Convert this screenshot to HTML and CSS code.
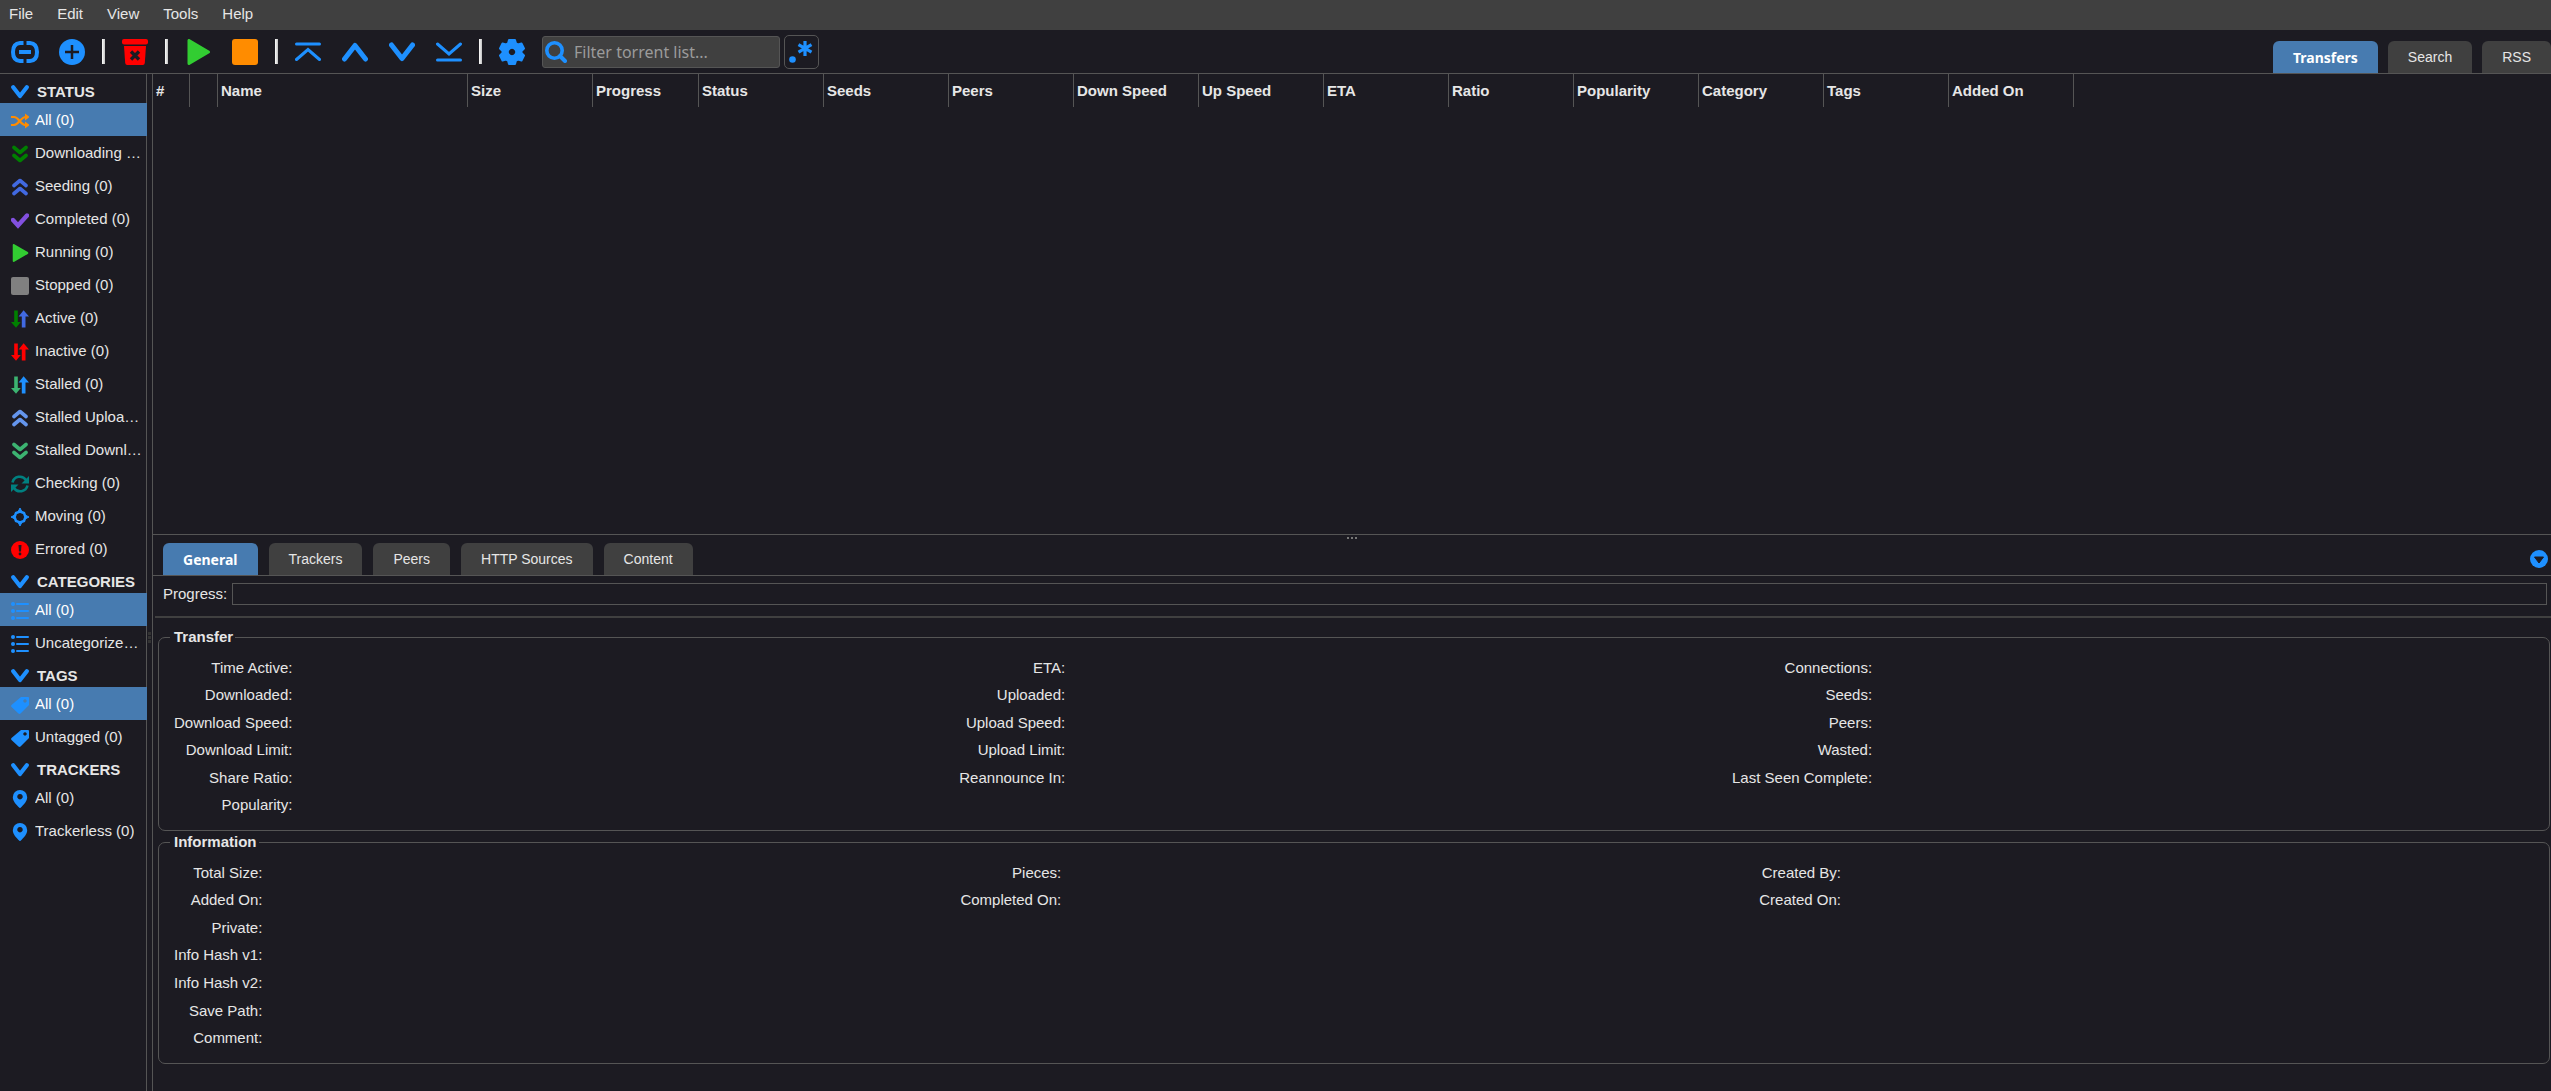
FILE: index.html
```html
<!DOCTYPE html>
<html lang="en">
<head>
    <meta charset="UTF-8">
    <meta name="viewport" content="width=device-width, initial-scale=1.0">
    <title>Torrents - Transfers</title>
    <link rel="stylesheet" href="styles.css">
</head>
<body>
    <!-- shared icons -->
    <svg class="sprite" aria-hidden="true">
        <symbol id="i-chevron" viewBox="0 0 18 18"><path d="M2.200 4.200l6.800 8.800 6.800-8.800" fill="none" stroke="currentColor" stroke-width="4.200" stroke-linecap="round" stroke-linejoin="round"/></symbol>
        <symbol id="i-shuffle" viewBox="0 0 18 18"><g fill="none" stroke="currentColor" stroke-width="2.200"><path d="M0 5h3c5 0 6 8 12 8h1"/><path d="M0 13h3c5 0 6-8 12-8h1"/></g><path d="M14 1.500L18.500 5 14 8.500zM14 9.500L18.500 13 14 16.500z" fill="currentColor"/></symbol>
        <symbol id="i-double-down" viewBox="0 0 18 18"><path d="M3 2.500l6 5 6-5M3 10.500l6 5 6-5" fill="none" stroke="currentColor" stroke-width="3.600" stroke-linecap="round" stroke-linejoin="round"/></symbol>
        <symbol id="i-double-up" viewBox="0 0 18 18"><path d="M3 7.500l6-5 6 5M3 15.500l6-5 6 5" fill="none" stroke="currentColor" stroke-width="3.600" stroke-linecap="round" stroke-linejoin="round"/></symbol>
        <symbol id="i-check" viewBox="0 0 18 18"><path d="M2 9l5 5.500L16 4.500" fill="none" stroke="currentColor" stroke-width="4.400" stroke-linecap="round"/></symbol>
        <symbol id="i-play" viewBox="0 0 26 26"><path d="M4 1.500v23L23.500 13z" fill="currentColor" stroke="currentColor" stroke-width="3" stroke-linejoin="round"/></symbol>
        <symbol id="i-stop" viewBox="0 0 26 26"><rect width="26" height="26" rx="3" fill="currentColor"/></symbol>
        <symbol id="i-arrow-down" viewBox="0 0 18 18"><path d="M3.200 0.500h3.600V12h3L5 17.800 0 12h3.200z" fill="currentColor"/></symbol>
        <symbol id="i-arrow-up" viewBox="0 0 18 18"><path d="M10.800 17.500V6.500H7.600L12.600 0.200 18 6.500H14.500v11z" fill="currentColor"/></symbol>
        <symbol id="i-refresh" viewBox="0 0 18 18"><g fill="none" stroke="currentColor" stroke-width="2.600"><path d="M1.500 7.500A7.500 7.500 0 0 1 15 5"/><path d="M16.500 10.500A7.500 7.500 0 0 1 3 13"/></g><path d="M18 1v7.500h-7.500zM0 17V9.500h7.500z" fill="currentColor"/></symbol>
        <symbol id="i-target" viewBox="0 0 18 18"><path d="M9 3.500L13 5l1.500 4L13 13l-4 1.500L5 13 3.500 9 5 5z" fill="none" stroke="currentColor" stroke-width="2.500"/><path d="M7.500 3L9 0l1.500 3zM7.500 15L9 18l1.500-3zM3 7.500L0 9l3 1.500zM15 7.500L18 9l-3 1.500z" fill="currentColor" stroke="currentColor"/></symbol>
        <symbol id="i-error" viewBox="0 0 18 18"><circle cx="9" cy="9" r="9" fill="currentColor"/><path d="M7.500 4h3L10 10.500H8z" fill="#1c1b22"/><circle cx="9" cy="13" r="1.400" fill="#1c1b22"/></symbol>
        <symbol id="i-list" viewBox="0 0 18 18"><g fill="currentColor"><circle cx="2" cy="2" r="2"/><circle cx="2" cy="9" r="2"/><circle cx="2" cy="16" r="2"/><rect x="5" y="1" width="13" height="2" rx="1"/><rect x="5" y="8" width="13" height="2" rx="1"/><rect x="5" y="15" width="13" height="2" rx="1"/></g></symbol>
        <symbol id="i-tag" viewBox="0 0 18 18"><path fill="currentColor" fill-rule="evenodd" d="M10 1h7q1 0 1 1v7L9.500 17.500q-1 .8-2 0L.5 11q-.8-1 0-2zM14 3.200a1.700 1.700 0 1 0 .01 0z"/></symbol>
        <symbol id="i-pin" viewBox="0 0 18 18"><path fill="currentColor" fill-rule="evenodd" d="M9 0a7.200 7.200 0 0 0-7.200 7.200C1.800 11 5 14.500 9 18.300c4-3.800 7.200-7.300 7.200-11.100A7.200 7.200 0 0 0 9 0zM9 4a2.700 2.700 0 1 1-.01 0z"/></symbol>
    </svg>

    <nav class="menubar">
        <a href="#">File</a>
        <a href="#">Edit</a>
        <a href="#">View</a>
        <a href="#">Tools</a>
        <a href="#">Help</a>
    </nav>

    <header class="toolbar">
        <button class="tool" type="button" title="Add torrent link">
            <svg class="icon-wide" viewBox="0 0 28 22"><path d="M12.500 2H9Q2 2.500 2 11t7 9h3.500M15.500 2H19q7 .5 7 9t-7 9h-3.500" fill="none" stroke="currentColor" stroke-width="4"/><rect x="8" y="9" width="12" height="4" fill="currentColor"/></svg>
        </button>
        <button class="tool" type="button" title="Add torrent file">
            <svg class="icon" viewBox="0 0 26 26"><circle cx="13" cy="13" r="13" fill="currentColor"/><path d="M13 6v14M6 13h14" stroke="#1c1b22" stroke-width="2.500"/></svg>
        </button>
        <span class="divider"></span>
        <button class="tool red" type="button" title="Remove">
            <svg class="icon" viewBox="0 0 26 26"><rect width="26" height="5.500" rx="2" fill="currentColor"/><path d="M2 7h22l-1.200 17q-.2 2-2 2H5.200q-1.800 0-2-2z" fill="currentColor"/><path d="M9 12.500l8 8M17 12.500l-8 8" stroke="#1c1b22" stroke-width="3.400"/></svg>
        </button>
        <span class="divider"></span>
        <button class="tool lime" type="button" title="Start"><svg class="icon"><use href="#i-play"/></svg></button>
        <button class="tool orange" type="button" title="Stop"><svg class="icon"><use href="#i-stop"/></svg></button>
        <span class="divider"></span>
        <button class="tool" type="button" title="Move to top of queue">
            <svg class="icon" viewBox="0 0 26 26"><path d="M1.500 5h23M1.500 20.500L13 10.500l11.500 10" fill="none" stroke="currentColor" stroke-width="3" stroke-linecap="round"/></svg>
        </button>
        <button class="tool" type="button" title="Move up">
            <svg class="icon" viewBox="0 0 26 26"><path d="M2.500 20L13 6.500 23.500 20" fill="none" stroke="currentColor" stroke-width="5" stroke-linecap="round" stroke-linejoin="round"/></svg>
        </button>
        <button class="tool" type="button" title="Move down">
            <svg class="icon" viewBox="0 0 26 26"><path d="M2.500 6L13 19.500 23.500 6" fill="none" stroke="currentColor" stroke-width="5" stroke-linecap="round" stroke-linejoin="round"/></svg>
        </button>
        <button class="tool" type="button" title="Move to bottom of queue">
            <svg class="icon" viewBox="0 0 26 26"><path d="M1.500 21h23M1.500 5L13 15 24.500 5" fill="none" stroke="currentColor" stroke-width="3" stroke-linecap="round"/></svg>
        </button>
        <span class="divider"></span>
        <button class="tool" type="button" title="Options">
            <svg class="icon" viewBox="0 0 26 26"><path fill="currentColor" stroke="currentColor" stroke-width="2" stroke-linejoin="round" fill-rule="evenodd" d="M10 1h6l1 3.500 2 1L22.500 4.500 25 9.500 22.500 12v2L25 16.500l-2.500 5L19 20.500l-2 1L16 25h-6l-1-3.500-2-1-3.500 1L1 16.500 3.500 14v-2L1 9.500l2.500-5L7 5.500l2-1zM13 8.800a4.200 4.200 0 1 0 .01 0z"/></svg>
        </button>
        <div class="filter">
            <svg class="filter-icon" viewBox="0 0 22 22"><circle cx="9.500" cy="9.500" r="7.700" fill="none" stroke="currentColor" stroke-width="3.600"/><path d="M15 15l5 5" stroke="currentColor" stroke-width="4" stroke-linecap="round"/></svg>
            <input type="text" placeholder="Filter torrent list..." aria-label="Filter torrent list">
        </div>
        <button class="regex" type="button" title="Use regular expressions">
            <svg viewBox="0 0 26 26"><circle cx="4.500" cy="20.500" r="3.300" fill="currentColor"/><path d="M17 2v15M10.500 5.700l13 7.500M23.500 5.700l-13 7.500" stroke="currentColor" stroke-width="3.200"/></svg>
        </button>
        <div class="tabs main-tabs">
            <button class="tab selected" type="button">Transfers</button>
            <button class="tab" type="button">Search</button>
            <button class="tab" type="button">RSS</button>
        </div>
    </header>

    <div class="desktop">
        <aside class="sidebar">
            <h2 class="filter-title"><svg><use href="#i-chevron"/></svg>STATUS</h2>
            <ul class="filter-list">
                <li class="selected"><a href="#"><svg class="orange"><use href="#i-shuffle"/></svg><span>All (0)</span></a></li>
                <li><a href="#"><svg class="green"><use href="#i-double-down"/></svg><span>Downloading (0)</span></a></li>
                <li><a href="#"><svg class="royal"><use href="#i-double-up"/></svg><span>Seeding (0)</span></a></li>
                <li><a href="#"><svg class="purple"><use href="#i-check"/></svg><span>Completed (0)</span></a></li>
                <li><a href="#"><svg class="lime"><use href="#i-play"/></svg><span>Running (0)</span></a></li>
                <li><a href="#"><svg class="gray"><use href="#i-stop"/></svg><span>Stopped (0)</span></a></li>
                <li><a href="#"><svg><use class="green" href="#i-arrow-down"/><use class="royal" href="#i-arrow-up"/></svg><span>Active (0)</span></a></li>
                <li><a href="#"><svg class="red"><use href="#i-arrow-down"/><use href="#i-arrow-up"/></svg><span>Inactive (0)</span></a></li>
                <li><a href="#"><svg><use class="sea" href="#i-arrow-down"/><use href="#i-arrow-up"/></svg><span>Stalled (0)</span></a></li>
                <li><a href="#"><svg class="cornflower"><use href="#i-double-up"/></svg><span>Stalled Uploading (0)</span></a></li>
                <li><a href="#"><svg class="sea"><use href="#i-double-down"/></svg><span>Stalled Downloading (0)</span></a></li>
                <li><a href="#"><svg class="teal"><use href="#i-refresh"/></svg><span>Checking (0)</span></a></li>
                <li><a href="#"><svg><use href="#i-target"/></svg><span>Moving (0)</span></a></li>
                <li><a href="#"><svg class="red"><use href="#i-error"/></svg><span>Errored (0)</span></a></li>
            </ul>
            <h2 class="filter-title"><svg><use href="#i-chevron"/></svg>CATEGORIES</h2>
            <ul class="filter-list">
                <li class="selected"><a href="#"><svg><use href="#i-list"/></svg><span>All (0)</span></a></li>
                <li><a href="#"><svg><use href="#i-list"/></svg><span>Uncategorized (0)</span></a></li>
            </ul>
            <h2 class="filter-title"><svg><use href="#i-chevron"/></svg>TAGS</h2>
            <ul class="filter-list">
                <li class="selected"><a href="#"><svg><use href="#i-tag"/></svg><span>All (0)</span></a></li>
                <li><a href="#"><svg><use href="#i-tag"/></svg><span>Untagged (0)</span></a></li>
            </ul>
            <h2 class="filter-title"><svg><use href="#i-chevron"/></svg>TRACKERS</h2>
            <ul class="filter-list">
                <li><a href="#"><svg><use href="#i-pin"/></svg><span>All (0)</span></a></li>
                <li><a href="#"><svg><use href="#i-pin"/></svg><span>Trackerless (0)</span></a></li>
            </ul>
        </aside>

        <div class="splitter"><i></i><i></i><i></i></div>

        <main class="content">
            <section class="torrents">
                <table class="torrent-table">
                    <colgroup>
                        <col class="col-number"><col class="col-state"><col class="col-name"><col><col class="col-progress">
                        <col><col><col><col><col><col><col><col><col><col><col>
                    </colgroup>
                    <thead>
                        <tr>
                            <th>#</th>
                            <th></th>
                            <th>Name</th>
                            <th>Size</th>
                            <th>Progress</th>
                            <th>Status</th>
                            <th>Seeds</th>
                            <th>Peers</th>
                            <th>Down Speed</th>
                            <th>Up Speed</th>
                            <th>ETA</th>
                            <th>Ratio</th>
                            <th>Popularity</th>
                            <th>Category</th>
                            <th>Tags</th>
                            <th>Added On</th>
                        </tr>
                    </thead>
                    <tbody></tbody>
                </table>
            </section>

            <section class="properties">
                <div class="handle"><i></i><i></i><i></i></div>
                <div class="properties-bar">
                    <div class="tabs properties-tabs">
                        <button class="tab selected" type="button">General</button>
                        <button class="tab" type="button">Trackers</button>
                        <button class="tab" type="button">Peers</button>
                        <button class="tab" type="button">HTTP Sources</button>
                        <button class="tab" type="button">Content</button>
                    </div>
                    <button class="collapse" type="button" title="Collapse">
                        <svg viewBox="0 0 18 18"><circle cx="9" cy="9" r="9" fill="currentColor"/><path d="M4.500 7h9L9 13z" fill="#1c1b22" stroke="#1c1b22" stroke-linejoin="round"/></svg>
                    </button>
                </div>

                <div class="progress-row">
                    <span>Progress:</span>
                    <div class="progress"></div>
                </div>
                <hr>

                <fieldset>
                    <legend>Transfer</legend>
                    <table class="details transfer">
                        <tr><th>Time Active:</th><td></td><th>ETA:</th><td></td><th>Connections:</th><td></td></tr>
                        <tr><th>Downloaded:</th><td></td><th>Uploaded:</th><td></td><th>Seeds:</th><td></td></tr>
                        <tr><th>Download Speed:</th><td></td><th>Upload Speed:</th><td></td><th>Peers:</th><td></td></tr>
                        <tr><th>Download Limit:</th><td></td><th>Upload Limit:</th><td></td><th>Wasted:</th><td></td></tr>
                        <tr><th>Share Ratio:</th><td></td><th>Reannounce In:</th><td></td><th>Last Seen Complete:</th><td></td></tr>
                        <tr><th>Popularity:</th><td colspan="5"></td></tr>
                    </table>
                </fieldset>

                <fieldset>
                    <legend>Information</legend>
                    <table class="details information">
                        <tr><th>Total Size:</th><td></td><th>Pieces:</th><td></td><th>Created By:</th><td></td></tr>
                        <tr><th>Added On:</th><td></td><th>Completed On:</th><td></td><th>Created On:</th><td></td></tr>
                        <tr><th>Private:</th><td colspan="5"></td></tr>
                        <tr><th>Info Hash v1:</th><td colspan="5"></td></tr>
                        <tr><th>Info Hash v2:</th><td colspan="5"></td></tr>
                        <tr><th>Save Path:</th><td colspan="5"></td></tr>
                        <tr><th>Comment:</th><td colspan="5"></td></tr>
                    </table>
                </fieldset>
            </section>
        </main>
    </div>
</body>
</html>
```
FILE: styles.css
```css
:root {
    --bg: #1c1b22;
    --panel: #404040;
    --line: #555555;
    --text: #e6e6e6;
    --accent: #1e90ff;
    --selected: #477bb0;
}

* {
    margin: 0;
    padding: 0;
    box-sizing: border-box;
}

body {
    display: flex;
    flex-direction: column;
    min-height: 100vh;
    background: var(--bg);
    color: var(--text);
    font-family: Arial, "Liberation Sans", sans-serif;
    font-size: 15px;
    line-height: 18px;
}

a {
    color: inherit;
    text-decoration: none;
}

button {
    background: none;
    border: none;
    color: var(--accent);
    font-family: inherit;
}

svg {
    display: block;
    flex-shrink: 0;
    color: var(--accent);
}

.sprite {
    position: absolute;
    width: 0;
    height: 0;
}

/* icon colors */
.orange, .orange svg { color: #ff8c00; }
.red, .red svg { color: #ff0000; }
.lime, .lime svg { color: #32cd32; }
.green { color: #008000; }
.royal { color: #4169e1; }
.purple { color: #8250df; }
.gray { color: #808080; }
.sea { color: #3cb371; }
.cornflower { color: #6495ed; }
.teal { color: #008080; }

/* menu and toolbar */
.menubar {
    display: flex;
    height: 30px;
    padding: 5px 9px;
    gap: 24px;
    background: var(--panel);
}

.toolbar {
    display: flex;
    align-items: center;
    height: 44px;
    padding-left: 1px;
    border-bottom: 1px solid var(--line);
}

.tool {
    display: flex;
    justify-content: center;
    width: 47px;
}

.icon {
    width: 26px;
    height: 26px;
}

.icon-wide {
    width: 28px;
    height: 26px;
}

.divider {
    width: 3px;
    height: 25px;
    margin: 0 6px 0 7px;
    background: linear-gradient(90deg, #ffffff, #c0c0c0);
}

.filter {
    position: relative;
    margin-left: 7px;
}

.filter-icon {
    position: absolute;
    top: 5px;
    left: 3px;
    width: 22px;
    height: 22px;
}

.filter input {
    display: block;
    width: 238px;
    height: 32px;
    padding-left: 31px;
    background: var(--panel);
    border: 1px solid var(--line);
    border-radius: 3px;
    color: var(--text);
    font-family: "Noto Sans", sans-serif;
    font-size: 16px;
}

.filter input::placeholder {
    color: #9b9b9b;
}

.regex {
    width: 35px;
    height: 34px;
    margin-left: 4px;
    padding: 3px;
    border: 1px solid var(--line);
    border-radius: 5px;
}

.regex svg {
    width: 26px;
    height: 26px;
}

.tabs {
    display: flex;
    gap: 10px;
}

.main-tabs {
    align-self: flex-end;
    margin-left: auto;
}

.tab {
    height: 32px;
    padding: 0 20px;
    background: var(--panel);
    border-radius: 6px 6px 0 0;
    color: var(--text);
    font-size: 14px;
}

.tab.selected {
    background: var(--selected);
    color: #ffffff;
    font-family: "Noto Sans", sans-serif;
    font-weight: bold;
}

/* sidebar */
.desktop {
    display: flex;
    flex: 1;
}

.sidebar {
    flex-shrink: 0;
    width: 147px;
    padding-top: 1px;
    border-right: 1px solid var(--line);
}

.filter-title {
    display: flex;
    align-items: center;
    gap: 8px;
    height: 28px;
    padding: 5px 0 0 11px;
    font-size: 15px;
}

.filter-title svg,
.filter-list svg {
    width: 18px;
    height: 18px;
}

.filter-list {
    list-style: none;
}

.filter-list a {
    display: flex;
    align-items: center;
    gap: 6px;
    height: 33px;
    margin-right: -1px;
    padding: 0 5px 0 11px;
}

.filter-list svg {
    margin-top: 3px;
}

.filter-list span {
    overflow: hidden;
    white-space: nowrap;
    text-overflow: ellipsis;
}

.filter-list .selected a {
    background: var(--selected);
    color: #ffffff;
}

.splitter {
    display: flex;
    flex-direction: column;
    align-items: center;
    justify-content: center;
    gap: 1px;
    flex-shrink: 0;
    width: 5px;
    padding-top: 109px;
}

.splitter i {
    width: 3px;
    height: 3px;
    background: #333333;
}

/* torrent list */
.content {
    display: flex;
    flex: 1;
    flex-direction: column;
    min-width: 0;
    border-left: 1px solid var(--line);
}

.torrents {
    flex: 1;
    overflow: hidden;
}

.torrent-table {
    width: 1921px;
    table-layout: fixed;
    border-collapse: separate;
    border-spacing: 0;
}

.col-number { width: 37px; }
.col-state { width: 28px; }
.col-name { width: 250px; }
.col-progress { width: 106px; }

.torrent-table th {
    height: 33px;
    padding-left: 3px;
    border-right: 1px solid var(--line);
    text-align: left;
    white-space: nowrap;
}

/* properties panel */
.properties {
    padding-bottom: 25px;
    border-top: 1px solid var(--line);
}

.handle {
    display: flex;
    justify-content: center;
    gap: 2px;
    height: 8px;
    padding-top: 2px;
}

.handle i {
    width: 2px;
    height: 2px;
    background: #777777;
}

.properties-bar {
    display: flex;
    align-items: center;
    justify-content: space-between;
    padding: 0 3px 0 10px;
    border-bottom: 1px solid var(--line);
}

.properties-tabs {
    gap: 11px;
}

.collapse svg {
    width: 18px;
    height: 18px;
}

.progress-row {
    display: flex;
    align-items: center;
    gap: 5px;
    padding: 7px 4px 11px 10px;
}

.progress {
    flex: 1;
    height: 22px;
    border: 1px solid var(--line);
}

hr {
    height: 2px;
    margin: 0 0 10px 2px;
    background: var(--panel);
    border: none;
}

fieldset {
    margin: 0 1px 2px 5px;
    padding: 8px 10px 11px 15px;
    border: 1px solid var(--line);
    border-radius: 7px;
}

legend {
    margin-left: -4px;
    padding: 0 2px 0 4px;
    font-weight: bold;
}

.details {
    width: 100%;
    border-collapse: collapse;
}

.transfer {
    height: 165px;
}

.information {
    height: 193px;
}

.details th {
    width: 1px;
    font-weight: normal;
    text-align: right;
    white-space: nowrap;
}

.details td {
    width: 33%;
}
```
